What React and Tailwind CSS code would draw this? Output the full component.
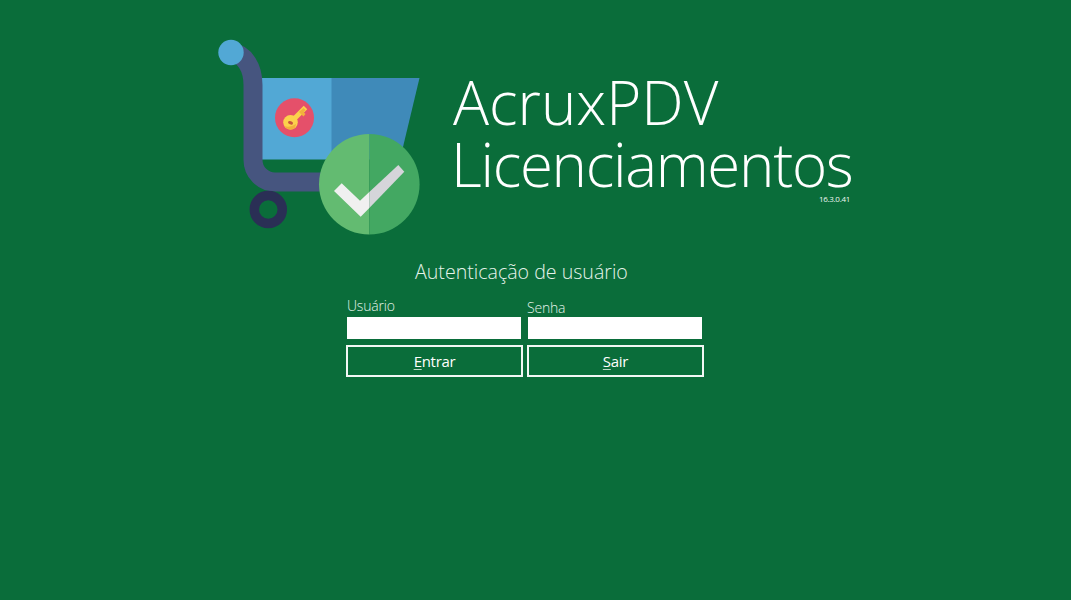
import React from "react";

function Logo() {
  return (
    <svg width="204" height="198" viewBox="217 39 204 198" className="block shrink-0">
      <polygon points="262,78 332,78 332,159.5 262,159.5" fill="#52a8d5" />
      <polygon points="331.5,78 419.5,78 400,159.5 331.5,159.5" fill="#3f8ab9" />
      <path d="M231 52 C245 54 253 68 253 85 L253 160 A22 22 0 0 0 275 182 L345 182" fill="none" stroke="#46557f" strokeWidth="19" />
      <circle cx="231" cy="52.5" r="12.7" fill="#52a8d5" />
      <circle cx="268.3" cy="209.5" r="14" fill="none" stroke="#2a2f55" strokeWidth="9.5" />
      <circle cx="294.5" cy="117.7" r="19.5" fill="#e5506a" />
      <path d="M291 122 L305.5 107.5" stroke="#fcd24c" strokeWidth="5" fill="none" />
      <path d="M299 112 L303.5 116.5 L305.5 114 L303.5 112 L305.5 110 L303.5 108 Z" fill="#f2b13c" />
      <circle cx="290.5" cy="122.3" r="7.3" fill="#fcd24c" />
      <path d="M284 126 A7.3 7.3 0 0 0 295 128 L296 124 Q290 128 284 126 Z" fill="#f2b13c" />
      <ellipse cx="290.5" cy="122.8" rx="2.6" ry="1.6" fill="#c8553f" transform="rotate(20 290.5 122.8)" />
      <path d="M369.3 134 A50.3 50.3 0 0 0 369.3 234.6 Z" fill="#63bb71" />
      <path d="M369.3 134 A50.3 50.3 0 0 1 369.3 234.6 Z" fill="#43a862" />
      <polygon points="334,191 341.7,183.3 360,200.7 369.3,192 369.3,208 360.7,216.7" fill="#f0f0f0" />
      <polygon points="369.3,192 398.3,165 404.3,171.7 369.3,208" fill="#d5d5da" />
    </svg>
  );
}

function Field({ label, labelClass }) {
  return (
    <label className="flex w-[174px] flex-col">
      <span className={`text-[14px] leading-[19px] font-light tracking-[-0.2px] text-[#e3f2e9] ${labelClass}`}>{label}</span>
      <input className="h-[22px] w-[174px] bg-white outline-none" />
    </label>
  );
}

function Btn({ hot, rest }) {
  return (
    <button className="h-[32px] w-[177px] border-2 border-[#f2f7f4] text-[15px] font-medium tracking-[-0.3px] text-white">
      <span className="underline decoration-[#b9d8c6] underline-offset-2">{hot}</span>
      {rest}
    </button>
  );
}

export default function App() {
  return (
    <div
      className="flex h-[600px] w-full flex-col overflow-hidden bg-[#0a6d3a] pt-[39px] pl-[217px] text-white"
      style={{ fontFamily: '"Open Sans", "Noto Sans", sans-serif' }}
    >
      <div className="flex items-start">
        <Logo />
        <div className="ml-[32px] flex flex-col items-start pt-[32px]">
          <div className="text-[60px] leading-[62px] font-light whitespace-nowrap">AcruxPDV</div>
          <div className="-ml-[2px] text-[60px] leading-[62px] font-light tracking-[-1.3px] whitespace-nowrap">Licenciamentos</div>
          <div className="mt-[-1px] w-[397px] text-right text-[8px] leading-[10px] font-normal tracking-[-0.3px] text-[#eef7f1]">16.3.0.41</div>
        </div>
      </div>
      <div className="mt-[22px] ml-[198px] text-[19.6px] leading-[26px] font-light text-[#e6f3eb]">Autenticação de usuário</div>
      <div className="mt-[11px] ml-[130px] flex items-end gap-[7px]">
        <Field label="Usuário" labelClass="pb-[2px]" />
        <Field label="Senha" labelClass="-ml-[1px]" />
      </div>
      <div className="mt-[6px] ml-[129px] flex gap-[4px]">
        <Btn hot="E" rest="ntrar" />
        <Btn hot="S" rest="air" />
      </div>
    </div>
  );
}
